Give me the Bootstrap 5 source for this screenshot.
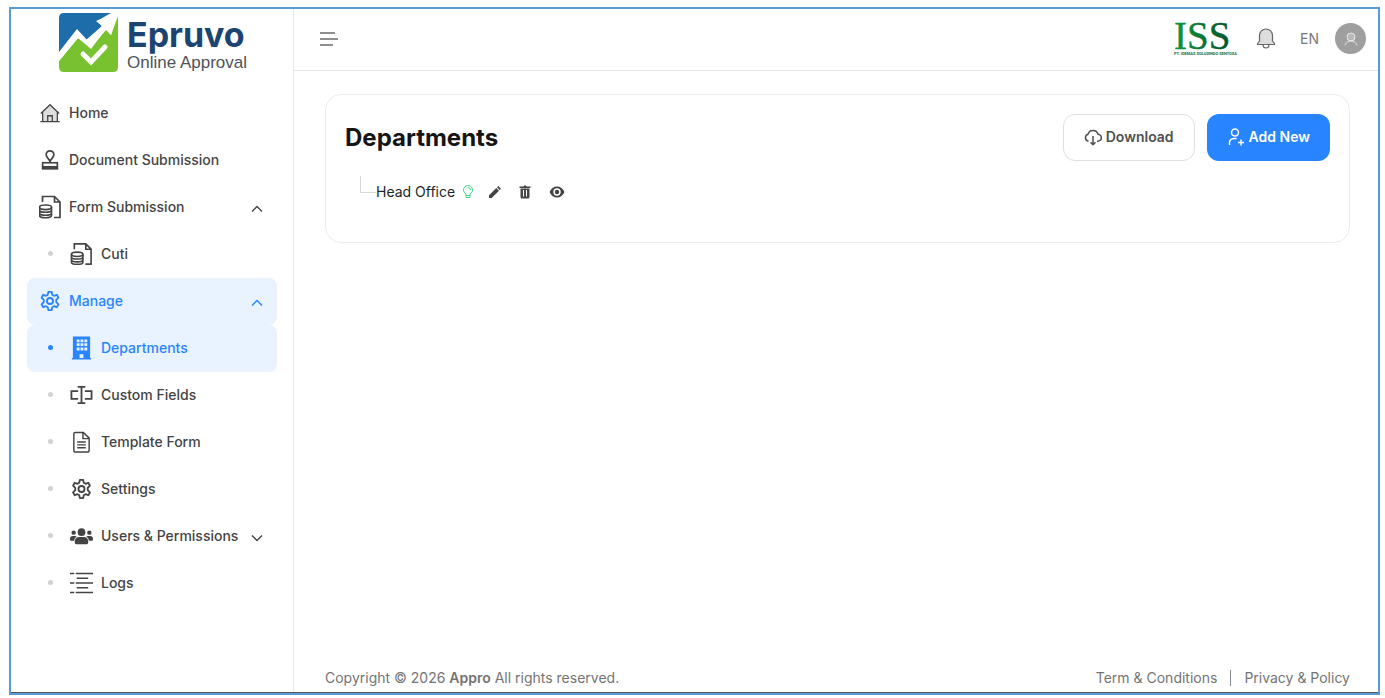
<!DOCTYPE html>
<html lang="en">
<head>
<meta charset="utf-8">
<meta name="viewport" content="width=device-width, initial-scale=1">
<title>Departments</title>
<link href="https://cdn.jsdelivr.net/npm/bootstrap@5.3.0/dist/css/bootstrap.min.css" rel="stylesheet">
<style>
body{font-family:Inter,"Liberation Sans",sans-serif;font-size:14px;line-height:20px;color:#4a4a4a;background:#fff}
.shell{min-height:100vh;padding:7px 5px 3px 9px}
.app-frame{border:2px solid #5b9bd5}
.app-inner{border-bottom:1px solid #555}
.sidebar{width:283px;flex:none;border-right:1px solid #e9e9e9;padding:4px 16px 0 16px}
.brand{height:77px;padding-left:32px;gap:9px;text-decoration:none}
.brand-name{font-family:Inter,sans-serif;font-weight:700;font-size:34px;line-height:36px;color:#1b4570}
.brand-sub{font-family:"Liberation Sans",sans-serif;font-size:17px;line-height:20px;color:#505358}
.side-link{width:100%;height:47px;border:0;border-radius:8px;background:none;color:#444;text-decoration:none;font-weight:500;text-align:left;padding:0 12px 2px;gap:8px}
.side-link svg{flex:none}
.side-link .chev{margin:4px 2px 0 auto}
.side-link.active{background:#e9f3ff;color:#2884ff}
.dot{width:5px;height:5px;border-radius:50%;background:#d2d2d2;flex:none;margin:0 9px}
.active .dot{background:#2884ff}
.topbar{height:62px;border-bottom:1px solid #e6e6e6;padding:0 12px 2px 24px}
.org-logo{overflow:visible}
.lang{color:#777;text-decoration:none}
.avatar{width:31px;height:31px;background:#9f9f9f;color:#e8e8e8;border:0}
.panel{margin:23px 28px 0 31px;border:1px solid #ececec;border-radius:16px;padding:19px;min-height:149px}
.panel h1{font-size:24px;line-height:32px;font-weight:700;color:#151515}
.panel-btn{height:47px;border-radius:12px;font-size:14px;font-weight:600;padding:0 20px 2px;gap:4px}
.btn-down{border:1px solid #dfdfdf;color:#4f4f4f;background:#fff}
.btn-add{background:#2884ff;color:#fff;border:0}
.tree-row{padding:15px 0 0 15px}
.tree-row .elbow{width:16px;height:17px;border:solid #d8d8d8;border-width:0 0 1px 1px;align-self:flex-start}
.tree-node{padding-top:6px}
.tree-row .tool{border:0;background:none;padding:0;color:#454545;display:flex}
.foot{margin:auto 28px 0 31px;padding-bottom:4px;color:#747474}
.foot strong{font-weight:600}
.foot a{color:#747474;text-decoration:none}
.foot .bar{width:1px;height:16px;background:#8a8a8a;margin:0 13px}
</style>
</head>
<body>
<svg class="d-none" xmlns="http://www.w3.org/2000/svg">
  <symbol id="i-home" viewBox="0 0 24 24"><path d="M4 11.2 12 3.5l8 7.7V21H4z" fill="#ddd"/><path d="M1.500 21.300h21M4 21V11M20 21V11M2 12.600 12 3l10 9.600M9.500 21v-6h5v6" fill="none" stroke="currentColor" stroke-width="1.400"/></symbol>
  <symbol id="i-stamp" viewBox="0 0 24 24"><path d="M12 13C9.500 10 7.800 8.500 7.800 6.200a4.200 4.200 0 0 1 8.400 0C16.200 8.500 14.500 10 12 13z" fill="none" stroke="currentColor" stroke-width="1.900"/><path d="M12 12v3" stroke="currentColor" stroke-width="1.900"/><rect x="4" y="15" width="16" height="6" fill="none" stroke="currentColor" stroke-width="1.800"/><path d="M3.100 18.500h17.800V22.500H3.100z" fill="currentColor"/></symbol>
  <symbol id="i-data" viewBox="0 0 24 24"><path d="M4.500 7V1.500h12L22 7v15.500h-6M16.500 1.500V7H22" fill="none" stroke="currentColor" stroke-width="1.700"/><ellipse cx="7.500" cy="12.300" rx="6" ry="2.300" fill="none" stroke="currentColor" stroke-width="1.700"/><path d="M1.500 12.300v8.200c0 3 12 3 12 0v-8.200M1.500 15c0 3 12 3 12 0M1.500 18c0 3 12 3 12 0" fill="none" stroke="currentColor" stroke-width="1.700"/></symbol>
  <symbol id="i-gear" viewBox="0 0 24 24"><path d="M10.200 2h3.600l.600 3.100 2 1.200 3-1.100 1.800 3.100-2.400 2.400v2.600l2.400 2.400-1.800 3.100-3-1.100-2 1.200-.600 3.100h-3.600l-.600-3.100-2-1.200-3 1.100-1.800-3.100 2.400-2.400v-2.600L2.800 8.300l1.800-3.100 3 1.100 2-1.200z" fill="none" stroke="currentColor" stroke-width="2" stroke-linejoin="round"/><circle cx="12" cy="12" r="3.300" fill="none" stroke="currentColor" stroke-width="2"/></symbol>
  <symbol id="i-building" viewBox="0 0 24 24"><path fill-rule="evenodd" fill="currentColor" d="M3 0h18v22.500h1V24H2v-1.500h1zM7 3h3v3H7zM11 3h3v3h-3zM15 3h3v3h-3zM7 7h3v3H7zM11 7h3v3h-3zM15 7h3v3h-3zM7 11.500h3v3H7zM11 11.500h3v3h-3zM15 11.500h3v3h-3zM10 18.500h4v4h-4z"/></symbol>
  <symbol id="i-field" viewBox="0 0 24 24"><path d="M8 3.500h8M8 20.500h8M12 3.500v17M8.500 8H1.500v8h7M15.500 8h7v8h-7" fill="none" stroke="currentColor" stroke-width="1.900"/></symbol>
  <symbol id="i-doc" viewBox="0 0 24 24"><path d="M5.500 2h8.500l6 6v12.500a2 2 0 0 1-2 2H6a2 2 0 0 1-2-2v-17A1.500 1.500 0 0 1 5.500 2zM13.500 2v6.500H20M7.500 12h9M7.500 15h9M7.500 18h9" fill="none" stroke="currentColor" stroke-width="1.500"/></symbol>
  <symbol id="i-users" viewBox="0 0 24 24"><g fill="currentColor"><circle cx="12" cy="8" r="4"/><circle cx="3.800" cy="8.500" r="2.300"/><circle cx="20.200" cy="8.500" r="2.300"/><path d="M5 19v-1.500c0-3 2-4.500 4.500-4.500h5c2.500 0 4.500 1.500 4.500 4.500V19q0 1.500-1.500 1.500h-11Q5 20.500 5 19zM0 16v-1q0-3 3-3h2.500q1 0 1.500.500-2.500 1.500-2.700 4.500H1q-1 0-1-1zM24 16v-1q0-3-3-3h-2.500q-1 0-1.500.500 2.500 1.500 2.700 4.500H23q1 0 1-1z"/></g></symbol>
  <symbol id="i-logs" viewBox="0 0 24 24"><path d="M0 2h4.500M6 2h18M7 7h12M0 12h4.500M6 12h18M7 17h12M0 22h4.500M6 22h18" stroke="currentColor" stroke-width="1.500"/></symbol>
  <symbol id="i-up" viewBox="0 0 12 12"><path d="M1 8.500 6 3.500l5 5" fill="none" stroke="currentColor" stroke-width="1.400"/></symbol>
  <symbol id="i-downchev" viewBox="0 0 12 12"><path d="M1 3.500 6 8.500l5-5" fill="none" stroke="currentColor" stroke-width="1.400"/></symbol>
</svg>

<div class="shell d-flex">
<div class="app-frame d-flex flex-grow-1">
<div class="app-inner d-flex flex-grow-1">

  <aside class="sidebar">
    <a href="#" class="brand d-flex align-items-start">
      <svg width="59" height="59" viewBox="0 0 59 59" aria-hidden="true">
        <path d="M5 0h47L38 8l5 5-16 14-9-10L0 40V5Q0 0 5 0z" fill="#1d6dab"/>
        <path d="M59 3v51q0 5-5 5H5q-5 0-5-5v-6L19 25l13 11L47 16l5 6z" fill="#78c12f"/>
        <path d="M0 39 18 16l11 12L43 13l-6-5L58 0 52 22l-5-5-15 17-13-9L0 48z" fill="#fff"/>
        <path d="m24 41 8 8 14-15" fill="none" stroke="#fff" stroke-width="5" stroke-linecap="round"/>
      </svg>
      <span class="d-flex flex-column pt-1">
        <span class="brand-name">Epruvo</span>
        <span class="brand-sub">Online Approval</span>
      </span>
    </a>
    <nav aria-label="Main">
      <ul class="list-unstyled mb-0">
        <li><a href="#" class="side-link d-flex align-items-center"><svg width="22" height="22"><use href="#i-home"/></svg>Home</a></li>
        <li><a href="#" class="side-link d-flex align-items-center"><svg width="22" height="22"><use href="#i-stamp"/></svg>Document Submission</a></li>
        <li>
          <button type="button" class="side-link d-flex align-items-center" aria-expanded="true"><svg width="22" height="24" viewBox="1 0 22 24"><use href="#i-data" width="24" height="24"/></svg>Form Submission<svg class="chev" width="12" height="12"><use href="#i-up"/></svg></button>
          <ul class="list-unstyled mb-0">
            <li><a href="#" class="side-link d-flex align-items-center"><span class="dot"></span><svg width="23" height="24"><use href="#i-data"/></svg>Cuti</a></li>
          </ul>
        </li>
        <li>
          <button type="button" class="side-link active d-flex align-items-center" aria-expanded="true"><svg width="22" height="22"><use href="#i-gear"/></svg>Manage<svg class="chev" width="12" height="12"><use href="#i-up"/></svg></button>
          <ul class="list-unstyled mb-0">
            <li><a href="#" class="side-link active d-flex align-items-center" aria-current="page"><span class="dot"></span><svg width="23" height="24"><use href="#i-building"/></svg>Departments</a></li>
            <li><a href="#" class="side-link d-flex align-items-center"><span class="dot"></span><svg width="23" height="24"><use href="#i-field"/></svg>Custom Fields</a></li>
            <li><a href="#" class="side-link d-flex align-items-center"><span class="dot"></span><svg width="23" height="24"><use href="#i-doc"/></svg>Template Form</a></li>
            <li><a href="#" class="side-link d-flex align-items-center"><span class="dot"></span><svg width="23" height="22"><use href="#i-gear"/></svg>Settings</a></li>
            <li><button type="button" class="side-link d-flex align-items-center" aria-expanded="false"><span class="dot"></span><svg width="23" height="24"><use href="#i-users"/></svg>Users &amp; Permissions<svg class="chev" width="12" height="12"><use href="#i-downchev"/></svg></button></li>
            <li><a href="#" class="side-link d-flex align-items-center"><span class="dot"></span><svg width="23" height="24"><use href="#i-logs"/></svg>Logs</a></li>
          </ul>
        </li>
      </ul>
    </nav>
  </aside>

  <div class="d-flex flex-column flex-grow-1">
    <header class="topbar d-flex align-items-center justify-content-between">
      <button type="button" class="btn p-0 border-0 d-flex" aria-label="Toggle menu"><svg width="22" height="16" viewBox="0 0 22 16"><path d="M2 2h15M2 8h18M2 14h13" stroke="#6b6b6b" stroke-width="1.700"/></svg></button>
      <div class="d-flex align-items-center">
        <svg class="org-logo" width="58" height="34" viewBox="0 0 58 34" role="img" aria-label="ISS">
          <defs><linearGradient id="iss" x1="0" x2="1"><stop offset="0" stop-color="#0a9a3c"/><stop offset="1" stop-color="#06502c"/></linearGradient></defs>
          <text x="0" y="27" font-family="Liberation Serif, serif" font-size="39" fill="url(#iss)" stroke="url(#iss)" stroke-width=".4">ISS</text>
          <text x="0" y="33" font-family="Roboto, Liberation Sans, sans-serif" font-size="4" font-weight="700" fill="#14713b">PT. IDEMAS SOLUSINDO SENTOSA</text>
        </svg>
        <button type="button" class="btn p-0 border-0 d-flex ms-4" aria-label="Notifications"><svg width="20" height="22" viewBox="0 0 20 22"><path d="M1.500 15.500 3.500 13V7.500a6.500 6.500 0 0 1 13 0V13l2 2.500v1h-17z" fill="#ddd" stroke="#666" stroke-width="1.200" stroke-linejoin="round"/><path d="M7 17c.300 4 5.700 4 6 0" fill="none" stroke="#666" stroke-width="1.200"/></svg></button>
        <a href="#" class="lang ms-4">EN</a>
        <button type="button" class="avatar rounded-circle d-flex align-items-center justify-content-center p-0 ms-3" aria-label="Account"><svg width="16" height="16" viewBox="0 0 16 16"><circle cx="8" cy="6" r="4" fill="#b8b8b8" stroke="currentColor"/><path d="M2 14.500c1-3.500 3-4.500 6-4.500s5 1 6 4.500" fill="none" stroke="currentColor"/></svg></button>
      </div>
    </header>

    <main class="panel">
      <div class="d-flex justify-content-between align-items-center">
        <h1 class="mb-0">Departments</h1>
        <div class="d-flex gap-2">
          <button type="button" class="btn panel-btn btn-down d-flex align-items-center me-1"><svg width="18" height="20" viewBox="0 0 18 20"><path d="M4.500 14.200A3.600 3.600 0 0 1 4 7.200 5.200 5.200 0 0 1 14 7.200a3.500 3.500 0 0 1-.300 7h-.700M9 9v8.500M6.500 15.300 9 17.800l2.500-2.500" fill="none" stroke="currentColor" stroke-width="1.500"/></svg>Download</button>
          <button type="button" class="btn panel-btn btn-add d-flex align-items-center"><svg width="18" height="20" viewBox="1 0 18 20"><circle cx="9" cy="5.500" r="3.500" fill="none" stroke="currentColor" stroke-width="1.500"/><path d="M3.500 18v-2.500c0-2.500 2-4 5.500-4h1.500M15 12.500v6M12 15.500h6" fill="none" stroke="currentColor" stroke-width="1.500"/></svg>Add New</button>
        </div>
      </div>
      <div class="tree-row d-flex align-items-center">
        <span class="elbow"></span>
        <div class="tree-node d-flex align-items-center">
          <span class="text-dark">Head Office</span>
          <button type="button" class="tool ms-2" aria-label="Active"><svg width="10" height="14" viewBox="1 0 10 14"><path d="M4 10C4 8.500 1.500 7.500 1.500 5a4.500 4.500 0 0 1 9 0C10.500 7.500 8 8.500 8 10v2.500H4zM4 10.500h4M6 2.500q2.500 0 2.500 2.500" fill="none" stroke="#41d683" stroke-width="1"/></svg></button>
          <button type="button" class="tool ms-3" aria-label="Edit"><svg width="12" height="12" viewBox="0 0 12 12"><path d="M0 12V9.300L7.300 2l2.700 2.700L2.700 12zM8 1.300 9.300 0 12 2.700 10.700 4z" fill="currentColor"/></svg></button>
          <button type="button" class="tool ms-3" aria-label="Delete"><svg width="16" height="14" viewBox="0 0 16 14"><path fill-rule="evenodd" d="M2.500 1.500h4L7 .500h2l.500 1h4V3h-11zM3.500 3.500h9V12q0 1.500-1.500 1.500H5Q3.500 13.500 3.500 12zM6 5v6.500h1V5zM9 5v6.500h1V5z" fill="currentColor"/></svg></button>
          <button type="button" class="tool ms-3" aria-label="View"><svg width="16" height="12" viewBox="0 0 16 12"><path fill-rule="evenodd" d="M.500 6C2 2.500 4.500.500 8 .500S14 2.500 15.500 6C14 9.500 11.500 11.500 8 11.500S2 9.500.500 6zM8 2.300a3.700 3.700 0 1 0 0 7.400 3.700 3.700 0 0 0 0-7.400z" fill="currentColor"/><circle cx="8" cy="6" r="2.200" fill="currentColor"/></svg></button>
        </div>
      </div>
    </main>

    <footer class="foot d-flex justify-content-between align-items-center">
      <div>Copyright © 2026 <strong>Appro</strong> All rights reserved.</div>
      <div class="d-flex align-items-center"><a href="#">Term &amp; Conditions</a><span class="bar"></span><a href="#">Privacy &amp; Policy</a></div>
    </footer>
  </div>

</div>
</div>
</div>
<script src="https://cdn.jsdelivr.net/npm/bootstrap@5.3.0/dist/js/bootstrap.bundle.min.js"></script>
</body>
</html>
